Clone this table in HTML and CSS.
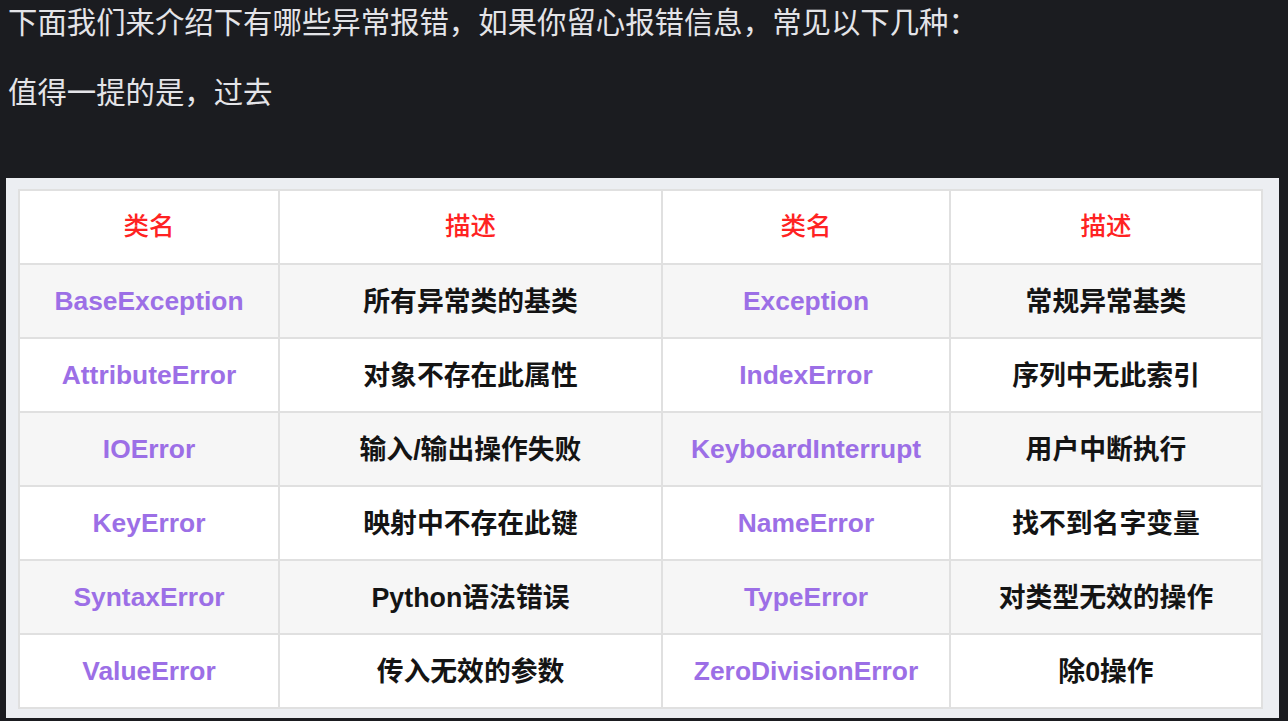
FILE: index.html
```html
<!DOCTYPE html>
<html lang="zh-CN">
<head>
<meta charset="utf-8">
<title>异常报错</title>
<link rel="stylesheet" href="styles.css">
</head>
<body>
<div class="article">
  <p class="para">下面我们来介绍下有哪些异常报错，如果你留心报错信息，常见以下几种：</p>
  <p class="para">值得一提的是，过去</p>
  <div class="figure">
    <table class="err-table">
      <colgroup>
        <col class="c1"><col class="c2"><col class="c3"><col class="c4">
      </colgroup>
      <tr class="head">
        <th>类名</th><th>描述</th><th>类名</th><th>描述</th>
      </tr>
      <tr class="alt">
        <td class="name">BaseException</td><td class="desc">所有异常类的基类</td>
        <td class="name">Exception</td><td class="desc">常规异常基类</td>
      </tr>
      <tr>
        <td class="name">AttributeError</td><td class="desc">对象不存在此属性</td>
        <td class="name">IndexError</td><td class="desc">序列中无此索引</td>
      </tr>
      <tr class="alt">
        <td class="name">IOError</td><td class="desc">输入/输出操作失败</td>
        <td class="name">KeyboardInterrupt</td><td class="desc">用户中断执行</td>
      </tr>
      <tr>
        <td class="name">KeyError</td><td class="desc">映射中不存在此键</td>
        <td class="name">NameError</td><td class="desc">找不到名字变量</td>
      </tr>
      <tr class="alt">
        <td class="name">SyntaxError</td><td class="desc">Python语法错误</td>
        <td class="name">TypeError</td><td class="desc">对类型无效的操作</td>
      </tr>
      <tr>
        <td class="name">ValueError</td><td class="desc">传入无效的参数</td>
        <td class="name">ZeroDivisionError</td><td class="desc">除0操作</td>
      </tr>
    </table>
  </div>
</div>
</body>
</html>
```

FILE: styles.css
```css
html, body {
  margin: 0;
  padding: 0;
  background: #1b1c20;
}

.article {
  padding: 3px 0 0 0;
  font-family: "Noto Sans CJK SC", "Noto Sans", sans-serif;
}

.para {
  margin: 0 0 35px 0;
  padding-left: 8px;
  color: #e4e4e8;
  font-size: 29.4px;
  line-height: 35px;
}

.figure {
  margin: 70px 9px 0 6px;
  background: #eceef2;
  padding: 11px 18px 9px 12px;
  width: 1243px;
}

.err-table {
  width: 1243px;
  table-layout: fixed;
  border-collapse: collapse;
  background: #ffffff;
}

.c1 { width: 260px; }
.c2 { width: 383px; }
.c3 { width: 288px; }
.c4 { width: 312px; }

.err-table th,
.err-table td {
  height: 72px;
  padding: 0;
  border: 2px solid #e0e0e0;
  text-align: center;
  vertical-align: middle;
}

.err-table tr.alt td {
  background: #f6f6f6;
}

.err-table th {
  color: #ff2222;
  font-family: "Noto Sans CJK SC", sans-serif;
  font-size: 25.5px;
  font-weight: 500;
  padding-bottom: 8px;
  height: 64px;
}

.name {
  color: #9c6fe6;
  font-family: "Liberation Sans", Arial, sans-serif;
  font-size: 26.4px;
  font-weight: 700;
}

.err-table td.desc {
  color: #141414;
  font-family: "Liberation Sans", "Noto Sans CJK SC", sans-serif;
  font-size: 26.8px;
  font-weight: 700;
  padding-bottom: 4px;
  height: 68px;
}
```
